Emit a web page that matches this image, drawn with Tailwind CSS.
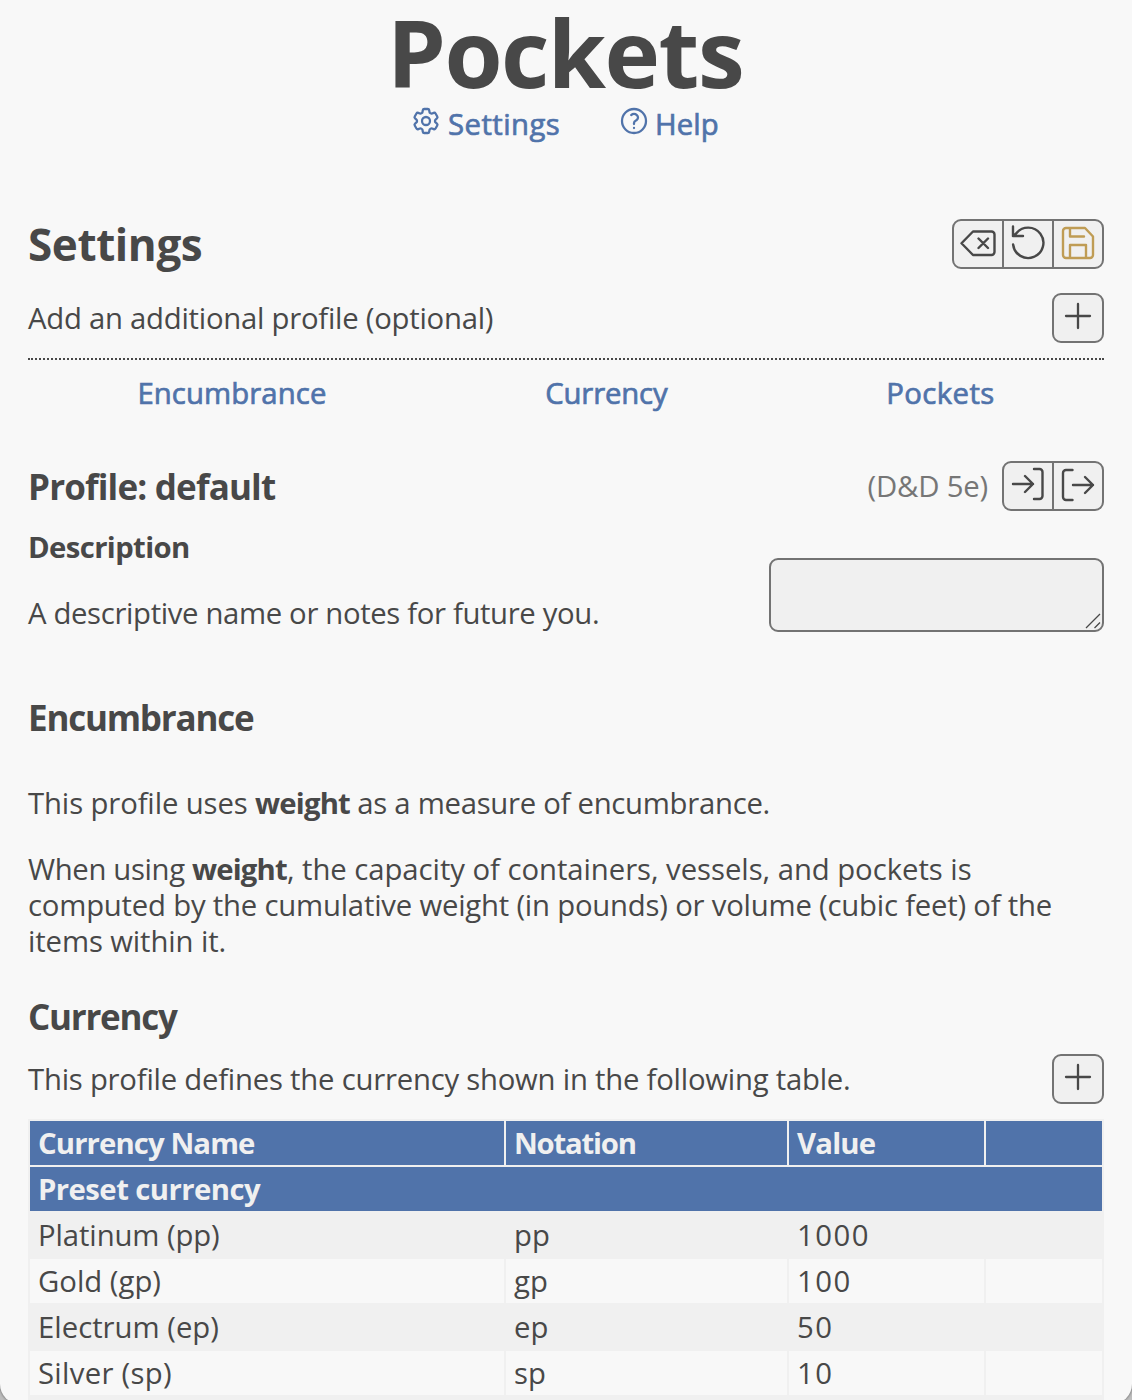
<!DOCTYPE html>
<html lang="en">
<head>
<meta charset="utf-8">
<title>Pockets</title>
<script src="https://cdn.jsdelivr.net/npm/@tailwindcss/browser@4"></script>
</head>
<body class="h-[1400px] overflow-hidden bg-[#bdbdbd] font-['Open_Sans',sans-serif] text-[29.3px] leading-9 text-[#484848]">
<div class="h-[1404px] overflow-hidden rounded-b-[20px] bg-[#f8f8f8] px-7 pt-[5px] shadow-[0_0_2px_1px_#8a8a8a]">

  <header>
    <h1 class="pr-0.5 text-center text-[94px] leading-[94px] font-bold tracking-[-1.53px]">Pockets</h1>
    <nav class="mt-[7px] flex h-9 justify-center gap-[58px] text-[#5073aa]">
      <a class="flex w-[150px] gap-1.5 tracking-[0.45px] [-webkit-text-stroke:0.7px_#5073aa]">
        <svg class="-mt-px size-8 shrink-0" viewBox="0 0 24 24" fill="none" stroke="currentColor" stroke-width="1.7" stroke-linecap="round" stroke-linejoin="round"><path d="M9.594 3.94c.09-.542.56-.94 1.11-.94h2.593c.55 0 1.02.398 1.11.94l.213 1.281c.063.374.313.686.645.87.074.04.147.083.22.127.325.196.72.257 1.075.124l1.217-.456a1.125 1.125 0 0 1 1.37.49l1.296 2.247a1.125 1.125 0 0 1-.26 1.431l-1.003.827c-.293.241-.438.613-.43.992a7.723 7.723 0 0 1 0 .255c-.008.378.137.75.43.991l1.004.827c.424.35.534.955.26 1.43l-1.298 2.247a1.125 1.125 0 0 1-1.369.491l-1.217-.456c-.355-.133-.75-.072-1.076.124a6.47 6.47 0 0 1-.22.128c-.331.183-.581.495-.644.869l-.213 1.281c-.09.543-.56.94-1.11.94h-2.594c-.55 0-1.019-.398-1.11-.94l-.213-1.281c-.062-.374-.312-.686-.644-.87a6.52 6.52 0 0 1-.22-.127c-.325-.196-.72-.257-1.076-.124l-1.217.456a1.125 1.125 0 0 1-1.369-.49l-1.297-2.247a1.125 1.125 0 0 1 .26-1.431l1.004-.827c.292-.24.437-.613.43-.991a6.932 6.932 0 0 1 0-.255c.007-.38-.138-.751-.43-.992l-1.004-.827a1.125 1.125 0 0 1-.26-1.43l1.297-2.247a1.125 1.125 0 0 1 1.37-.491l1.216.456c.356.133.751.072 1.076-.124.072-.044.146-.086.22-.128.332-.183.582-.495.644-.869l.214-1.28Z"/><circle cx="12" cy="12" r="3"/></svg>
        <span>Settings</span>
      </a>
      <a class="flex w-[104px] gap-[5px] tracking-[0.1px] [-webkit-text-stroke:0.7px_#5073aa]">
        <svg class="-mt-px size-8 shrink-0" viewBox="0 0 24 24" fill="none" stroke="currentColor" stroke-width="1.7" stroke-linecap="round" stroke-linejoin="round"><path d="M9.879 7.519c1.171-1.025 3.071-1.025 4.242 0 1.172 1.025 1.172 2.687 0 3.712-.203.179-.43.326-.67.442-.745.361-1.45.999-1.45 1.827v.75M21 12a9 9 0 1 1-18 0 9 9 0 0 1 18 0Zm-9 5.25h.008v.008H12v-.008Z"/></svg>
        <span>Help</span>
      </a>
    </nav>
  </header>

  <section class="mt-[77px] flex h-[50px] items-center justify-between">
    <h2 class="text-[44px] leading-[50px] font-bold tracking-[-0.4px]">Settings</h2>
    <div class="flex h-[50px] w-[152px] divide-x-2 divide-[#737373] overflow-hidden rounded-[9px] border-2 border-[#737373] bg-[#f0f0f0]">
      <button class="w-[50px]"><svg class="h-[46px] w-12" viewBox="0 0 48 46" fill="none" stroke="#484848" stroke-width="2.4" stroke-linecap="round" stroke-linejoin="round"><path d="M19 10.5H37.5a3 3 0 0 1 3 3V31a3 3 0 0 1-3 3H19L7.5 22.25zM24.5 17.5l9.5 9.5M34 17.5L24.5 27"/></svg></button>
      <button class="w-[50px]"><svg class="h-[46px] w-12" viewBox="0 0 48 46" fill="none" stroke="#484848" stroke-width="2.4" stroke-linecap="round" stroke-linejoin="round"><path d="M9 5.5V15h10M9.1 23.5A15.2 15.2 0 1 0 12.2 12.5L9 15"/></svg></button>
      <button class="w-12"><svg class="h-[46px] w-12" viewBox="0 0 48 46" fill="none" stroke="#bf9c54" stroke-width="2.4" stroke-linecap="round" stroke-linejoin="round"><path d="M12 7H31l8 8.5V34a3 3 0 0 1-3 3H12a3 3 0 0 1-3-3V10a3 3 0 0 1 3-3zM16 7v8.5H30M16 37V24H32V37"/></svg></button>
    </div>
  </section>

  <section class="mt-6 flex h-[50px] items-center justify-between">
    <p class="tracking-[-0.25px]">Add an additional profile (optional)</p>
    <button class="h-[50px] w-[52px] rounded-[9px] border-2 border-[#737373] bg-[#f0f0f0]"><svg class="h-[46px] w-12" viewBox="0 0 48 46" fill="none" stroke="#484848" stroke-width="2.3" stroke-linecap="round"><path d="M12 21H36M24 9V33"/></svg></button>
  </section>

  <nav class="mt-[15px] flex justify-around border-t-2 border-dotted border-[#484848] pt-[15px] text-[#5073aa] [-webkit-text-stroke:0.7px_#5073aa]">
    <a class="tracking-[0.1px]">Encumbrance</a>
    <a class="tracking-[-0.15px]">Currency</a>
    <a class="tracking-[0.4px]">Pockets</a>
  </nav>

  <section class="mt-[50px] flex h-[50px] items-center">
    <h3 class="grow pt-0.5 text-[35px] leading-[50px] font-bold tracking-[-0.83px]">Profile: default</h3>
    <span class="mr-3.5 tracking-[-0.19px] text-[#767676]">(D&amp;D 5e)</span>
    <div class="flex h-[50px] w-[102px] divide-x-2 divide-[#737373] overflow-hidden rounded-[9px] border-2 border-[#737373] bg-[#f0f0f0]">
      <button class="w-[50px]"><svg class="h-[46px] w-12" viewBox="0 0 48 46" fill="none" stroke="#484848" stroke-width="2.4" stroke-linecap="round" stroke-linejoin="round"><path d="M9 21H29M21 13l8 8-8 8M30 6h5.500a3 3 0 0 1 3 3V33a3 3 0 0 1-3 3H30"/></svg></button>
      <button class="w-12"><svg class="h-[46px] w-12" viewBox="0 0 48 46" fill="none" stroke="#484848" stroke-width="2.4" stroke-linecap="round" stroke-linejoin="round"><path d="M19 22H39M31 14l8 8-8 8M18.500 7H12a3 3 0 0 0-3 3V34a3 3 0 0 0 3 3h6.500"/></svg></button>
    </div>
  </section>

  <section class="mt-[18px] flex h-[103px] items-end justify-between">
    <div class="h-full">
      <h4 class="font-bold tracking-[-0.62px]">Description</h4>
      <p class="mt-[30px] tracking-[-0.35px]">A descriptive name or notes for future you.</p>
    </div>
    <div class="flex h-[74px] w-[335px] items-end justify-end rounded-[9px] border-2 border-[#737373] bg-[#f0f0f0]">
      <svg class="size-5" viewBox="0 0 20 20" fill="none" stroke="#484848" stroke-width="1.3"><path d="M4 18L18 4M12.500 18L18 12.500"/></svg>
    </div>
  </section>

  <section>
    <h3 class="mt-[65px] text-[35px] leading-[42px] font-bold tracking-[-1.22px]">Encumbrance</h3>
    <p class="mt-[46px] tracking-[-0.28px]"><span class="tracking-[-0.12px]">This profile uses </span><b class="tracking-[-0.83px]">weight</b> as a measure of encumbrance.</p>
    <p class="mt-[30px] whitespace-nowrap tracking-[-0.05px]"><span class="tracking-[-0.35px]">When using </span><b class="tracking-[-0.83px]">weight</b>, the capacity of containers, vessels, and pockets is<br><span class="tracking-[-0.21px]">computed by the cumulative weight (in pounds) or volume (cubic feet) of the</span><br><span class="tracking-[-0.12px]">items within it.</span></p>
  </section>

  <section>
    <h3 class="mt-[37px] text-[35px] leading-[42px] font-bold tracking-[-1.25px]">Currency</h3>
    <div class="mt-4 flex h-[50px] items-center justify-between">
      <p class="tracking-[-0.23px]">This profile defines the currency shown in the following table.</p>
      <button class="h-[50px] w-[52px] rounded-[9px] border-2 border-[#737373] bg-[#f0f0f0]"><svg class="h-[46px] w-12" viewBox="0 0 48 46" fill="none" stroke="#484848" stroke-width="2.3" stroke-linecap="round"><path d="M12 21H36M24 9V33"/></svg></button>
    </div>

    <div class="mt-[15px] grid auto-rows-[44px] grid-cols-[474px_281px_195px_116px] gap-0.5 bg-[#f0f0f0] p-0.5 leading-[44px] *:pl-2">
      <div class="bg-[#5073aa] font-bold tracking-[-0.89px] text-[#f0f0f0]">Currency Name</div>
      <div class="bg-[#5073aa] font-bold tracking-[-1.2px] text-[#f0f0f0]">Notation</div>
      <div class="bg-[#5073aa] font-bold tracking-[-0.8px] text-[#f0f0f0]">Value</div>
      <div class="bg-[#5073aa]"></div>
      <div class="col-span-4 bg-[#5073aa] font-bold tracking-[-0.55px] text-[#f0f0f0]">Preset currency</div>

      <div class="tracking-[-0.1px]">Platinum (pp)</div><div>pp</div><div class="tracking-[1.5px]">1000</div><div></div>
      <div class="bg-[#f8f8f8]">Gold (gp)</div><div class="bg-[#f8f8f8]">gp</div><div class="bg-[#f8f8f8] tracking-[1.5px]">100</div><div class="bg-[#f8f8f8]"></div>
      <div>Electrum (ep)</div><div>ep</div><div class="tracking-[1.5px]">50</div><div></div>
      <div class="bg-[#f8f8f8] tracking-[0.3px]">Silver (sp)</div><div class="bg-[#f8f8f8]">sp</div><div class="bg-[#f8f8f8] tracking-[1.5px]">10</div><div class="bg-[#f8f8f8]"></div>
      <div></div>
    </div>
  </section>
</div>
</body>
</html>
